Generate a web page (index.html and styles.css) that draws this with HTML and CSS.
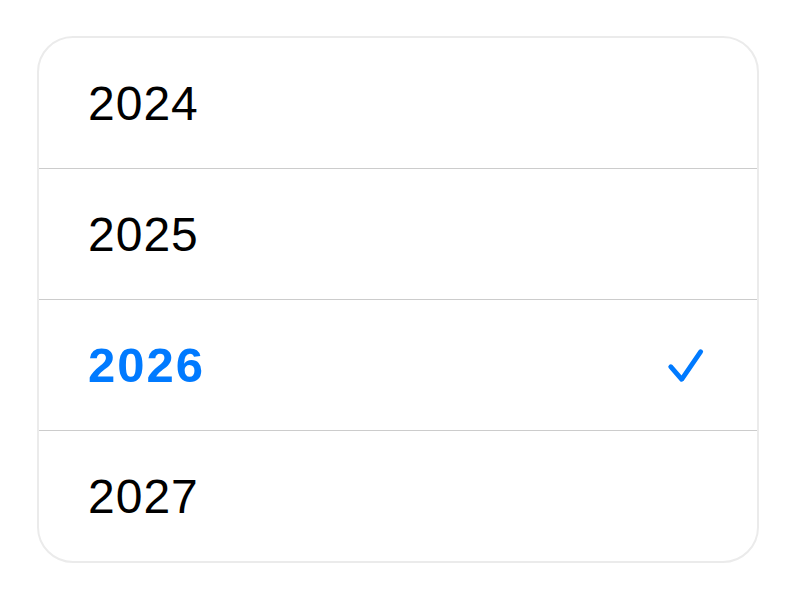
FILE: index.html
```html
<!DOCTYPE html>
<html lang="en">
<head>
    <meta charset="UTF-8">
    <meta name="viewport" content="width=device-width, initial-scale=1.0">
    <title>Year picker</title>
    <link rel="stylesheet" href="styles.css">
</head>
<body>

<div class="year-list">
    <div class="year-row">
        <span class="year">2024</span>
    </div>
    <div class="year-row">
        <span class="year">2025</span>
    </div>
    <div class="year-row selected">
        <span class="year">2026</span>
        <svg class="check" width="40" height="40" viewBox="0 0 40 40">
            <polyline points="4.7,21.7 15.7,34.3 34.7,6.7" fill="none" stroke="#007aff" stroke-width="4.8" stroke-linecap="round" stroke-linejoin="round"/>
        </svg>
    </div>
    <div class="year-row">
        <span class="year">2027</span>
    </div>
</div>

</body>
</html>
```

FILE: styles.css
```css
body {
    margin: 0;
    padding: 36px 37px;
    background: #fff;
    font-family: "Liberation Sans", Arial, sans-serif;
}
.year-list {
    border: 2px solid #ebebeb;
    border-radius: 36px;
    overflow: hidden;
    background: #fff;
}
.year-row {
    display: flex;
    align-items: center;
    justify-content: space-between;
    height: 130px;
    padding: 0 51px 0 49px;
    border-bottom: 1px solid #cccccc;
}
.year-row:last-child {
    border-bottom: none;
}
.year {
    font-size: 48px;
    letter-spacing: 1px;
    color: #000;
}
.selected .year {
    color: #007aff;
    font-weight: bold;
    font-size: 49px;
    letter-spacing: 2px;
}
.check {
    display: block;
}
```
